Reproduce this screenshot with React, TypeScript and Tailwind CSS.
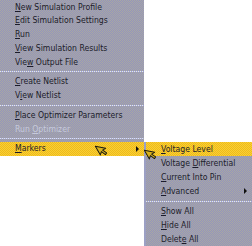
import React from 'react';

type Item = { label: string; key: number; disabled?: boolean; arrow?: boolean; active?: boolean } | 'sep';

const mainItems: Item[] = [
  { label: 'New Simulation Profile', key: 0 },
  { label: 'Edit Simulation Settings', key: 0 },
  { label: 'Run', key: 0 },
  { label: 'View Simulation Results', key: 0 },
  { label: 'View Output File', key: 3 },
  'sep',
  { label: 'Create Netlist', key: 0 },
  { label: 'View Netlist', key: 1 },
  'sep',
  { label: 'Place Optimizer Parameters', key: 0 },
  { label: 'Run Optimizer', key: 4, disabled: true },
  'sep',
  { label: 'Markers', key: 0, arrow: true, active: true },
];

const subItems: Item[] = [
  { label: 'Voltage Level', key: 0, active: true },
  { label: 'Voltage Differential', key: 8 },
  { label: 'Current Into Pin', key: 0 },
  { label: 'Advanced', key: 0, arrow: true },
  'sep',
  { label: 'Show All', key: 0 },
  { label: 'Hide All', key: 0 },
  { label: 'Delete All', key: 5 },
];

function Label({ text, k }: { text: string; k: number }) {
  return (
    <span className="whitespace-nowrap">
      {text.slice(0, k)}
      <u className="underline-offset-[1px]">{text[k]}</u>
      {text.slice(k + 1)}
    </span>
  );
}

function Cursor({ className }: { className: string }) {
  return (
    <svg viewBox="0 0 12 16" className={className}>
      <path
        d="M1 1 L1 12 L3.8 9.4 L6 14.4 L8 13.5 L5.8 8.6 L9.6 8.6 Z"
        fill="#d8b21e"
        stroke="#1a1a10"
        strokeWidth="1.1"
        strokeLinejoin="round"
      />
    </svg>
  );
}

function Menu({ items, rowH, className }: { items: Item[]; rowH: string; className: string }) {
  return (
    <div className={className}>
      {items.map((it, i) =>
        it === 'sep' ? (
          <div key={i} className="h-[6px] flex items-center">
            <div className="h-px w-full bg-[repeating-linear-gradient(90deg,#e0e4f4_0_1px,#a8acd0_1px_2px)]" />
          </div>
        ) : (
          <div
            key={i}
            className={`${rowH} relative flex items-center pl-[15px] ${
              it.active
                ? 'bg-[conic-gradient(#f9d232_25%,#eeb81e_0_50%,#f9d232_0_75%,#eeb81e_0)] bg-[length:2px_2px]'
                : ''
            } ${it.disabled ? 'text-[#c6cadc]' : 'text-[#1c1c2a]'}`}
          >
            <Label text={it.label} k={it.key} />
            {it.arrow && (
              <span className="absolute right-[5px] top-1/2 -translate-y-1/2 w-0 h-0 border-y-[3px] border-y-transparent border-l-[3px] border-l-[#101010]" />
            )}
          </div>
        )
      )}
    </div>
  );
}

export default function App() {
  const gray =
    'bg-[conic-gradient(#9494bc_25%,#a8a8a2_0_50%,#9494bc_0_75%,#a8a8a2_0)] bg-[length:2px_2px]';
  return (
    <div className="relative w-[252px] h-[246px] bg-white overflow-hidden font-['DejaVu_Sans_Condensed','DejaVu_Sans',sans-serif] text-[8.6px] leading-none">
      <Menu items={mainItems} rowH="h-[13.75px]" className={`w-[144px] ${gray}`} />
      <Menu
        items={subItems}
        rowH="h-[14px]"
        className={`absolute left-[144px] top-[142px] w-[108px] border-l-2 border-[#9ca0c4] ${gray}`}
      />
      <Cursor className="absolute left-[97px] top-[142px] w-[11px] h-[15px] -rotate-[30deg]" />
      <Cursor className="absolute left-[146px] top-[146px] w-[11px] h-[15px] -rotate-[30deg]" />
    </div>
  );
}
